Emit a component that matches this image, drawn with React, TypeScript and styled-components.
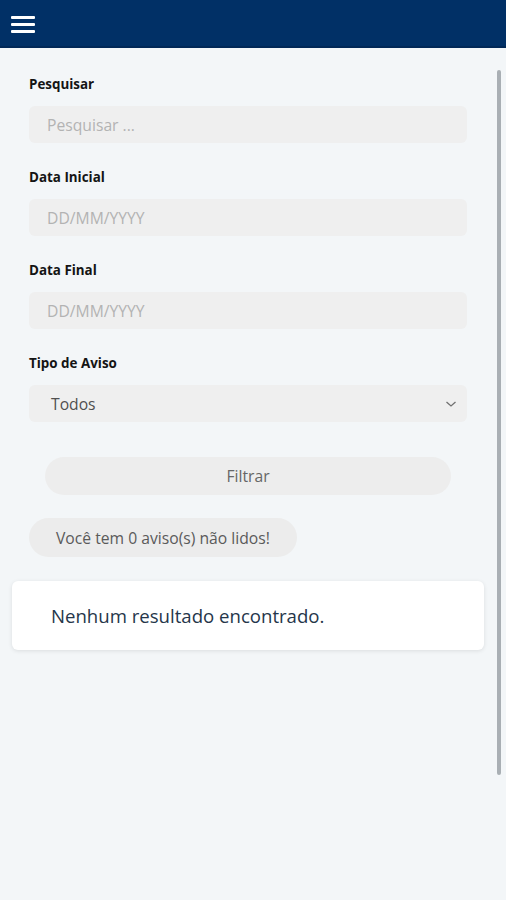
import React from "react";
import styled, { createGlobalStyle } from "styled-components";

const GlobalStyle = createGlobalStyle`
    html, body {
        margin: 0;
        padding: 0;
        background: #f3f6f8;
        font-family: "Open Sans", "Noto Sans", sans-serif;
    }
`;

const Page = styled.div`
    position: relative;
    min-height: 900px;
    background: #f3f6f8;
`;
const Header = styled.header`
    height: 46px;
    background: #013066;
    border-bottom: 2px solid #012857;
    display: flex;
    align-items: center;
    padding-left: 11px;
`;
const MenuButton = styled.div`
    display: flex;
    flex-direction: column;
    gap: 4px;
    padding-top: 2px;
`;
const MenuBar = styled.span`
    display: block;
    width: 24px;
    height: 3px;
    border-radius: 1px;
    background: #ffffff;
`;
const Content = styled.main`
    padding: 27px 22px 0 12px;
`;
const Form = styled.div`
    padding: 0 17px;
    display: flex;
    flex-direction: column;
`;
const Field = styled.div`
    display: flex;
    flex-direction: column;
    margin-bottom: 25px;
`;
const Label = styled.label`
    font-size: 13.4px;
    line-height: 18px;
    font-weight: 700;
    color: #141414;
    margin-bottom: 13px;
`;
const Input = styled.div<{ $filled?: boolean }>`
    height: 37px;
    box-sizing: border-box;
    border-radius: 6px;
    background: #efefef;
    display: flex;
    align-items: center;
    justify-content: space-between;
    padding: 0 10px 0 ${(p) => (p.$filled ? "22px" : "18px")};
    font-size: 15.7px;
    color: ${(p) => (p.$filled ? "#505050" : "#b3b3b3")};
`;
const FilterButton = styled.div`
    margin: 10px 16px 0;
    height: 38px;
    border-radius: 19px;
    background: #ededed;
    display: flex;
    align-items: center;
    justify-content: center;
    font-size: 15.7px;
    color: #666;
`;
const Badge = styled.div`
    margin-top: 23px;
    align-self: flex-start;
    height: 39px;
    padding: 0 27px;
    border-radius: 20px;
    background: #ececec;
    display: flex;
    align-items: center;
    font-size: 15.7px;
    color: #5a5a5a;
`;
const Card = styled.div`
    margin-top: 24px;
    height: 69px;
    background: #ffffff;
    border-radius: 6px;
    box-shadow: 0 1px 4px rgba(0, 0, 0, 0.1);
    display: flex;
    align-items: center;
    padding-left: 39px;
    font-size: 18.6px;
    color: #25364a;
`;
const Scrollbar = styled.div`
    position: absolute;
    left: 497px;
    top: 70px;
    width: 4px;
    height: 705px;
    border-radius: 2px;
    background: #a9afb4;
`;

const Chevron = () => (
    <svg width="12" height="8" viewBox="0 0 12 8" fill="none">
        <path d="M1.5 2 L6 6 L10.5 2" stroke="#707070" strokeWidth="1.3" />
    </svg>
);

const App = () => {
    return (
        <Page>
            <GlobalStyle />
            <Header>
                <MenuButton>
                    <MenuBar />
                    <MenuBar />
                    <MenuBar />
                </MenuButton>
            </Header>
            <Content>
                <Form>
                    <Field>
                        <Label>Pesquisar</Label>
                        <Input>Pesquisar ...</Input>
                    </Field>
                    <Field>
                        <Label>Data Inicial</Label>
                        <Input>DD/MM/YYYY</Input>
                    </Field>
                    <Field>
                        <Label>Data Final</Label>
                        <Input>DD/MM/YYYY</Input>
                    </Field>
                    <Field>
                        <Label>Tipo de Aviso</Label>
                        <Input $filled>
                            Todos
                            <Chevron />
                        </Input>
                    </Field>
                    <FilterButton>Filtrar</FilterButton>
                    <Badge>Você tem 0 aviso(s) não lidos!</Badge>
                </Form>
                <Card>Nenhum resultado encontrado.</Card>
            </Content>
            <Scrollbar />
        </Page>
    );
};

export default App;
